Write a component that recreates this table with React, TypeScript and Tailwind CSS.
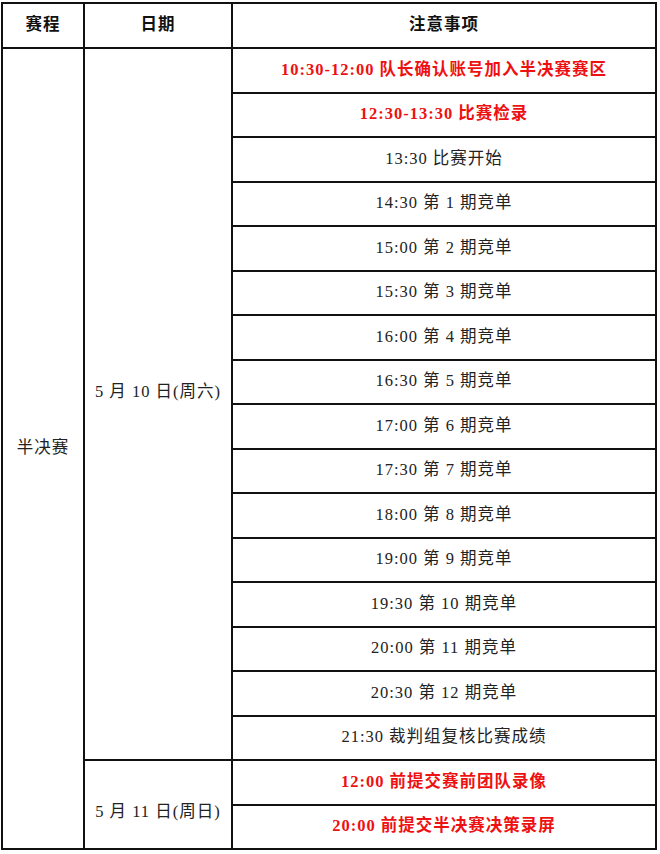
const rows: { text: string; red?: boolean }[] = [
  { text: "10:30-12:00 队长确认账号加入半决赛赛区", red: true },
  { text: "12:30-13:30 比赛检录", red: true },
  { text: "13:30 比赛开始" },
  { text: "14:30 第 1 期竞单" },
  { text: "15:00 第 2 期竞单" },
  { text: "15:30 第 3 期竞单" },
  { text: "16:00 第 4 期竞单" },
  { text: "16:30 第 5 期竞单" },
  { text: "17:00 第 6 期竞单" },
  { text: "17:30 第 7 期竞单" },
  { text: "18:00 第 8 期竞单" },
  { text: "19:00 第 9 期竞单" },
  { text: "19:30 第 10 期竞单" },
  { text: "20:00 第 11 期竞单" },
  { text: "20:30 第 12 期竞单" },
  { text: "21:30 裁判组复核比赛成绩" },
  { text: "12:00 前提交赛前团队录像", red: true },
  { text: "20:00 前提交半决赛决策录屏", red: true },
];

const cell = "border-2 border-[#111] text-center align-middle p-0";

export default function App() {
  return (
    <div className="w-[660px] h-[854px] bg-white pt-[2px] pl-[1px] font-['Liberation_Serif','Noto_Sans_CJK_SC',serif] text-[16.5px] tracking-[1px] text-[#222]">
      <table className="w-[656px] border-collapse table-fixed">
        <colgroup>
          <col className="w-[82px]" />
          <col className="w-[148px]" />
          <col />
        </colgroup>
        <thead>
          <tr className="h-[45px]">
            <th className={`${cell} font-bold text-[#111]`}>赛程</th>
            <th className={`${cell} font-bold text-[#111]`}>日期</th>
            <th className={`${cell} font-bold text-[#111]`}>注意事项</th>
          </tr>
        </thead>
        <tbody>
          {rows.map((r, i) => (
            <tr key={i} className="h-[44.5px]">
              {i === 0 && (
                <td rowSpan={18} className={cell}>
                  半决赛
                </td>
              )}
              {i === 0 && (
                <td rowSpan={16} className={`${cell} pb-6`}>
                  5 月 10 日(周六)
                </td>
              )}
              {i === 16 && (
                <td rowSpan={2} className={`${cell} pt-4`}>
                  5 月 11 日(周日)
                </td>
              )}
              <td
                className={`${cell} ${r.red ? "text-[#ee1111] font-bold" : ""}`}
              >
                {r.text}
              </td>
            </tr>
          ))}
        </tbody>
      </table>
    </div>
  );
}
